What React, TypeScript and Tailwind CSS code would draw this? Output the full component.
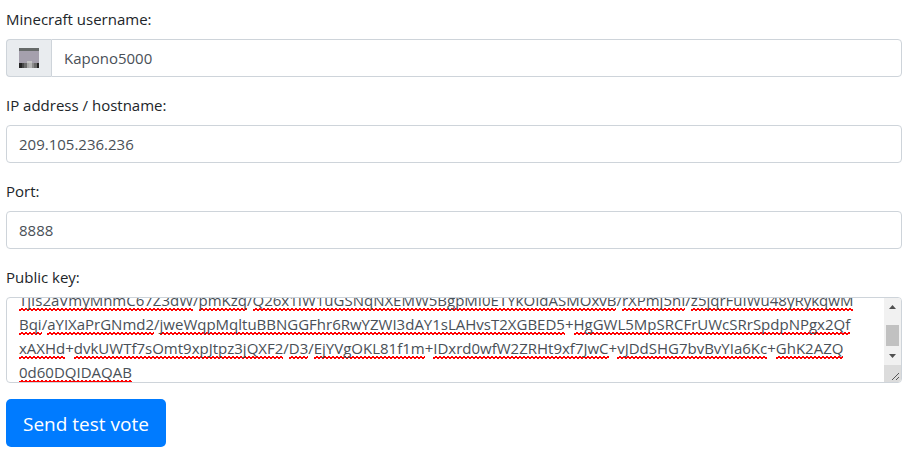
import { useEffect, useRef, useState } from 'react';

const PUBLIC_KEY = [
  'TjIs2aVmyMnmC67Z3dW/pmKzq/Q26x1IW1uGSNqNXEMW5BgpMI0ETYkOIdASMOxvB/rXPmj5nI/z5jqrFuIWu48yRykqwM',
  'Bqi/aYIXaPrGNmd2/jweWqpMqltuBBNGGFhr6RwYZWI3dAY1sLAHvsT2XGBED5+HgGWL5MpSRCFrUWcSRrSpdpNPgx2Qf',
  'xAXHd+dvkUWTf7sOmt9xpJtpz3jQXF2/D3/EjYVgOKL81f1m+IDxrd0wfW2ZRHt9xf7JwC+vJDdSHG7bvBvYIa6Kc+GhK2AZQ',
  '0d60DQIDAQAB',
].join('\n');

const fieldClass =
  'block w-full h-[38px] px-3 border border-[#ced4da] rounded bg-white text-[15px] leading-6 text-[#495057] focus:outline-none';
const labelClass = 'block mb-2 leading-6';

function PlayerHead() {
  return (
    <svg width="20" height="20" viewBox="0 0 8 8" shapeRendering="crispEdges" aria-hidden="true">
      <rect width="8" height="8" fill="#a5a0ad" />
      <rect width="8" height="1" fill="#666a69" />
      <rect x="3" y="5" width="2" height="1" fill="#c4c4c4" />
      <rect y="6" width="8" height="2" fill="#6b6b6b" />
      <rect y="6" width="1" height="2" fill="#242424" />
      <rect x="1" y="6" width="1" height="2" fill="#484848" />
      <rect x="3" y="6" width="1" height="2" fill="#a8a8a8" />
      <rect x="4" y="6" width="1" height="2" fill="#b5b5b5" />
      <rect x="5" y="6" width="1" height="2" fill="#8b8b8b" />
      <rect x="7" y="6" width="1" height="2" fill="#242424" />
    </svg>
  );
}

function KeyField() {
  const [value, setValue] = useState(PUBLIC_KEY);
  const area = useRef<HTMLTextAreaElement>(null);
  const marks = useRef<HTMLDivElement>(null);

  const syncMarks = () => {
    if (area.current && marks.current) marks.current.scrollTop = area.current.scrollTop;
  };

  useEffect(() => {
    if (area.current) area.current.scrollTop = 16;
    syncMarks();
  }, []);

  return (
    <div className="flex h-[86px] border border-[#ced4da] rounded overflow-hidden bg-white">
      <div className="relative flex-1 min-w-0">
        {/* spelling marks behind the typed text */}
        <div
          ref={marks}
          aria-hidden="true"
          className="absolute inset-0 overflow-hidden px-3 py-1.5 text-[15px] leading-6 whitespace-pre text-transparent"
        >
          {value.split(/([+/\n])/).map((part, i) =>
            /^[+/\n]?$/.test(part) ? (
              part
            ) : (
              <span
                key={i}
                className="pb-px bg-[linear-gradient(90deg,transparent_2px,red_2px),linear-gradient(red,red),linear-gradient(90deg,red_2px,transparent_2px)] bg-[length:4px_1px] bg-[position:0_calc(100%-2px),0_calc(100%-1px),0_100%] bg-repeat-x"
              >
                {part}
              </span>
            ),
          )}
        </div>
        <textarea
          id="key"
          ref={area}
          value={value}
          wrap="off"
          spellCheck={false}
          onChange={(e) => setValue(e.target.value)}
          onScroll={syncMarks}
          className="relative block w-full h-full px-3 py-1.5 bg-transparent text-[15px] leading-6 text-[#495057] resize-none focus:outline-none [scrollbar-width:none]"
        />
      </div>
      <div className="flex flex-col w-[17px] bg-[#f1f1f1]" aria-hidden="true">
        <svg width="17" height="67" viewBox="0 0 17 67">
          <path d="M5 11h7L8.500 7z" fill="#505050" />
          <rect x="2" y="27" width="13" height="21" fill="#c1c1c1" />
          <path d="M5 56h7l-3.500 4z" fill="#505050" />
        </svg>
        <svg width="17" height="17" viewBox="0 0 17 17" className="bg-[#dcdcdc]">
          <path d="M8 15l7-7M12 15l3-3" stroke="#555" fill="none" />
        </svg>
      </div>
    </div>
  );
}

function App() {
  return (
    <form
      onSubmit={(e) => e.preventDefault()}
      className="pl-1.5 pr-[9px] pt-[7px] pb-3 bg-white text-[15px] text-[#212529] font-['Segoe_UI','Open_Sans',sans-serif]"
    >
      <div className="mb-4">
        <label htmlFor="username" className={labelClass}>Minecraft username:</label>
        <div className="flex">
          <span className="flex items-center px-3 border border-r-0 border-[#ced4da] rounded-l bg-[#e9ecef]">
            <PlayerHead />
          </span>
          <input id="username" type="text" defaultValue="Kapono5000" className={`${fieldClass} rounded-l-none`} />
        </div>
      </div>
      <div className="mb-4">
        <label htmlFor="host" className={labelClass}>IP address / hostname:</label>
        <input id="host" type="text" defaultValue="209.105.236.236" className={fieldClass} />
      </div>
      <div className="mb-4">
        <label htmlFor="port" className={labelClass}>Port:</label>
        <input id="port" type="text" defaultValue="8888" className={fieldClass} />
      </div>
      <div className="mb-4">
        <label htmlFor="key" className={labelClass}>Public key:</label>
        <KeyField />
      </div>
      <button type="submit" className="h-12 px-[17px] pt-0.5 rounded-[5px] bg-[#007bff] text-[19px] text-white">
        Send test vote
      </button>
    </form>
  );
}

export default App;
